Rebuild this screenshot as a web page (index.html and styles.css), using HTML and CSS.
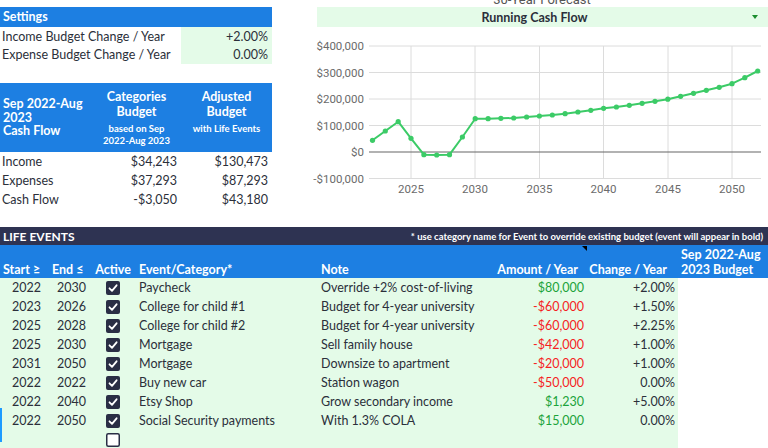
FILE: index.html
```html
<!DOCTYPE html>
<html>
<head>
<meta charset="utf-8">
<link rel="stylesheet" href="styles.css">
</head>
<body>
<div class="top">
  <div class="left">
    <div class="settings">
      <div class="hdr">Settings</div>
      <div class="srow"><span class="lbl">Income Budget Change / Year</span><span class="val">+2.00%</span></div>
      <div class="srow"><span class="lbl">Expense Budget Change / Year</span><span class="val">0.00%</span></div>
    </div>
    <div class="cf">
      <div class="cfhead">
        <div class="c1">Sep 2022-Aug<br>2023<br>Cash Flow</div>
        <div class="c2"><div class="big">Categories<br>Budget</div><div class="small">based on Sep<br>2022-Aug 2023</div></div>
        <div class="c3"><div class="big">Adjusted<br>Budget</div><div class="small">with Life Events</div></div>
      </div>
      <div class="cfrow"><span class="l">Income</span><span class="r">$34,243</span><span class="r">$130,473</span></div>
      <div class="cfrow"><span class="l">Expenses</span><span class="r">$37,293</span><span class="r">$87,293</span></div>
      <div class="cfrow"><span class="l">Cash Flow</span><span class="r">-$3,050</span><span class="r">$43,180</span></div>
    </div>
  </div>
  <div class="chart">
    <div class="ctitle">30-Year Forecast</div>
    <div class="dd"><span class="ddt">Running Cash Flow</span><span class="arrow"></span></div>
    <svg class="plot" width="468" height="200" viewBox="300 27 468 200">
      <g stroke="#dcdcdc" stroke-width="1">
        <line x1="369" y1="46" x2="761" y2="46"/>
        <line x1="369" y1="72.5" x2="761" y2="72.5"/>
        <line x1="369" y1="99" x2="761" y2="99"/>
        <line x1="369" y1="125.5" x2="761" y2="125.5"/>
        <line x1="369" y1="178.5" x2="761" y2="178.5"/>
        <line x1="411" y1="46" x2="411" y2="178.5"/>
        <line x1="475" y1="46" x2="475" y2="178.5"/>
        <line x1="539.5" y1="46" x2="539.5" y2="178.5"/>
        <line x1="603.5" y1="46" x2="603.5" y2="178.5"/>
        <line x1="668" y1="46" x2="668" y2="178.5"/>
        <line x1="732" y1="46" x2="732" y2="178.5"/>
      </g>
      <line x1="369" y1="152" x2="761" y2="152" stroke="#666" stroke-width="1.2"/>
      <g class="ylab" text-anchor="end">
        <text x="364" y="50">$400,000</text>
        <text x="364" y="76.5">$300,000</text>
        <text x="364" y="103">$200,000</text>
        <text x="364" y="129.5">$100,000</text>
        <text x="364" y="156">$0</text>
        <text x="364" y="182.5">-$100,000</text>
      </g>
      <g class="xlab" text-anchor="middle">
        <text x="411" y="193">2025</text>
        <text x="475" y="193">2030</text>
        <text x="539.5" y="193">2035</text>
        <text x="603.5" y="193">2040</text>
        <text x="668" y="193">2045</text>
        <text x="732" y="193">2050</text>
      </g>
      <polyline fill="none" stroke="#3ccb67" stroke-width="2" stroke-linejoin="round"
        points="372.5,140.3 385.3,131 398.2,121.7 411,138.3 423.9,154.7 436.7,155 449.5,154.7 462.4,137 475.2,118.7 488.1,118.7 500.9,118.3 513.7,118 526.6,117 539.4,116 552.3,115 565.1,113.7 577.9,112 590.8,110.3 603.6,108.3 616.4,107 629.3,105.3 642.1,103.3 655,101.3 667.8,99.2 680.6,96.3 693.5,93.3 706.3,90.3 719.2,87.3 732,83.7 744.8,77.7 757.7,71"/>
      <g fill="#3ccb67">
        <circle cx="372.5" cy="140.3" r="2.6"/><circle cx="385.3" cy="131" r="2.6"/><circle cx="398.2" cy="121.7" r="2.6"/><circle cx="411" cy="138.3" r="2.6"/><circle cx="423.9" cy="154.7" r="2.6"/><circle cx="436.7" cy="155" r="2.6"/><circle cx="449.5" cy="154.7" r="2.6"/><circle cx="462.4" cy="137" r="2.6"/><circle cx="475.2" cy="118.7" r="2.6"/><circle cx="488.1" cy="118.7" r="2.6"/><circle cx="500.9" cy="118.3" r="2.6"/><circle cx="513.7" cy="118" r="2.6"/><circle cx="526.6" cy="117" r="2.6"/><circle cx="539.4" cy="116" r="2.6"/><circle cx="552.3" cy="115" r="2.6"/><circle cx="565.1" cy="113.7" r="2.6"/><circle cx="577.9" cy="112" r="2.6"/><circle cx="590.8" cy="110.3" r="2.6"/><circle cx="603.6" cy="108.3" r="2.6"/><circle cx="616.4" cy="107" r="2.6"/><circle cx="629.3" cy="105.3" r="2.6"/><circle cx="642.1" cy="103.3" r="2.6"/><circle cx="655" cy="101.3" r="2.6"/><circle cx="667.8" cy="99.2" r="2.6"/><circle cx="680.6" cy="96.3" r="2.6"/><circle cx="693.5" cy="93.3" r="2.6"/><circle cx="706.3" cy="90.3" r="2.6"/><circle cx="719.2" cy="87.3" r="2.6"/><circle cx="732" cy="83.7" r="2.6"/><circle cx="744.8" cy="77.7" r="2.6"/><circle cx="757.7" cy="71" r="2.6"/>
      </g>
    </svg>
  </div>
</div>

<div class="life">
  <div class="lebar"><span class="let">LIFE EVENTS</span><span class="len">* use category name for Event to override existing budget (event will appear in bold)</span></div>
  <div class="lehead">
    <div class="h hstart">Start ≥</div>
    <div class="h hend">End ≤</div>
    <div class="h hact">Active</div>
    <div class="h hev">Event/Category*</div>
    <div class="h hnote">Note</div>
    <div class="h hamt">Amount / Year<span class="cmt"></span></div>
    <div class="h hchg">Change / Year</div>
    <div class="h hbud">Sep 2022-Aug<br>2023 Budget</div>
  </div>
  <div class="rows">
    <div class="row"><span class="s">2022</span><span class="e">2030</span><span class="a"><svg class="cb" width="14" height="14" viewBox="0 0 14 14"><rect width="14" height="14" rx="2" fill="#2a2e45"/><path d="M3.5 7.3 L6 9.8 L10.6 4.3" fill="none" stroke="#fff" stroke-width="1.8" stroke-linecap="round" stroke-linejoin="round"/></svg></span><span class="ev">Paycheck</span><span class="nt">Override +2% cost-of-living</span><span class="am pos">$80,000</span><span class="ch">+2.00%</span><span class="bd"></span></div>
    <div class="row"><span class="s">2023</span><span class="e">2026</span><span class="a"><svg class="cb" width="14" height="14" viewBox="0 0 14 14"><rect width="14" height="14" rx="2" fill="#2a2e45"/><path d="M3.5 7.3 L6 9.8 L10.6 4.3" fill="none" stroke="#fff" stroke-width="1.8" stroke-linecap="round" stroke-linejoin="round"/></svg></span><span class="ev">College for child #1</span><span class="nt">Budget for 4-year university</span><span class="am neg">-$60,000</span><span class="ch">+1.50%</span><span class="bd"></span></div>
    <div class="row"><span class="s">2025</span><span class="e">2028</span><span class="a"><svg class="cb" width="14" height="14" viewBox="0 0 14 14"><rect width="14" height="14" rx="2" fill="#2a2e45"/><path d="M3.5 7.3 L6 9.8 L10.6 4.3" fill="none" stroke="#fff" stroke-width="1.8" stroke-linecap="round" stroke-linejoin="round"/></svg></span><span class="ev">College for child #2</span><span class="nt">Budget for 4-year university</span><span class="am neg">-$60,000</span><span class="ch">+2.25%</span><span class="bd"></span></div>
    <div class="row"><span class="s">2025</span><span class="e">2030</span><span class="a"><svg class="cb" width="14" height="14" viewBox="0 0 14 14"><rect width="14" height="14" rx="2" fill="#2a2e45"/><path d="M3.5 7.3 L6 9.8 L10.6 4.3" fill="none" stroke="#fff" stroke-width="1.8" stroke-linecap="round" stroke-linejoin="round"/></svg></span><span class="ev">Mortgage</span><span class="nt">Sell family house</span><span class="am neg">-$42,000</span><span class="ch">+1.00%</span><span class="bd"></span></div>
    <div class="row"><span class="s">2031</span><span class="e">2050</span><span class="a"><svg class="cb" width="14" height="14" viewBox="0 0 14 14"><rect width="14" height="14" rx="2" fill="#2a2e45"/><path d="M3.5 7.3 L6 9.8 L10.6 4.3" fill="none" stroke="#fff" stroke-width="1.8" stroke-linecap="round" stroke-linejoin="round"/></svg></span><span class="ev">Mortgage</span><span class="nt">Downsize to apartment</span><span class="am neg">-$20,000</span><span class="ch">+1.00%</span><span class="bd"></span></div>
    <div class="row"><span class="s">2022</span><span class="e">2022</span><span class="a"><svg class="cb" width="14" height="14" viewBox="0 0 14 14"><rect width="14" height="14" rx="2" fill="#2a2e45"/><path d="M3.5 7.3 L6 9.8 L10.6 4.3" fill="none" stroke="#fff" stroke-width="1.8" stroke-linecap="round" stroke-linejoin="round"/></svg></span><span class="ev">Buy new car</span><span class="nt">Station wagon</span><span class="am neg">-$50,000</span><span class="ch">0.00%</span><span class="bd"></span></div>
    <div class="row"><span class="s">2022</span><span class="e">2040</span><span class="a"><svg class="cb" width="14" height="14" viewBox="0 0 14 14"><rect width="14" height="14" rx="2" fill="#2a2e45"/><path d="M3.5 7.3 L6 9.8 L10.6 4.3" fill="none" stroke="#fff" stroke-width="1.8" stroke-linecap="round" stroke-linejoin="round"/></svg></span><span class="ev">Etsy Shop</span><span class="nt">Grow secondary income</span><span class="am pos">$1,230</span><span class="ch">+5.00%</span><span class="bd"></span></div>
    <div class="row"><span class="s">2022</span><span class="e">2050</span><span class="a"><svg class="cb" width="14" height="14" viewBox="0 0 14 14"><rect width="14" height="14" rx="2" fill="#2a2e45"/><path d="M3.5 7.3 L6 9.8 L10.6 4.3" fill="none" stroke="#fff" stroke-width="1.8" stroke-linecap="round" stroke-linejoin="round"/></svg></span><span class="ev">Social Security payments</span><span class="nt">With 1.3% COLA</span><span class="am pos">$15,000</span><span class="ch">0.00%</span><span class="bd"></span></div>
    <div class="row"><span class="s"></span><span class="e"></span><span class="a"><svg class="cb" width="14" height="14" viewBox="0 0 14 14"><rect x="0.75" y="0.75" width="12.5" height="12.5" rx="1.5" fill="#fff" stroke="#2a2e45" stroke-width="1.5"/></svg></span><span class="ev"></span><span class="nt"></span><span class="am"></span><span class="ch"></span><span class="bd"></span></div>
    <div class="sel"></div>
  </div>
</div>
</body>
</html>
```

FILE: styles.css
```css
* { box-sizing: border-box; }
body {
  margin: 0;
  width: 768px;
  height: 448px;
  overflow: hidden;
  background: #fff;
  font-family: Lato, "Noto Sans", sans-serif;
  font-size: 12.5px;
  color: #2b2f3a;
}
.top { display: flex; height: 227px; }
.left { width: 272px; padding-top: 7px; }
.hdr {
  background: #1d7fe2;
  color: #fff;
  font-weight: 700;
  height: 20px;
  line-height: 20px;
  padding-left: 3px;
}
.srow { display: flex; height: 18.5px; align-items: stretch; }
.srow .lbl { width: 181px; padding-left: 2px; display: flex; align-items: center; }
.srow .val {
  flex: 1;
  background: #e4fbe8;
  display: flex;
  align-items: center;
  justify-content: flex-end;
  padding-right: 4px;
}
.cf { margin-top: 19px; }
.cfhead {
  display: grid;
  grid-template-columns: 92px 89px 91px;
  background: #1d7fe2;
  color: #fff;
  font-weight: 700;
  height: 69px;
}
.c1 { align-self: center; padding-left: 3px; line-height: 13.5px; }
.c2, .c3 { align-self: start; text-align: center; padding-top: 6px; }
.big { line-height: 15px; }
.small { font-size: 9.5px; line-height: 11.5px; margin-top: 4px; }
.cfrow {
  display: grid;
  grid-template-columns: 92px 89px 91px;
  height: 19px;
  align-items: center;
}
.cfrow .l { padding-left: 2px; }
.cfrow .r { text-align: right; padding-right: 4px; }

.chart { margin-left: 28px; width: 468px; }
.ctitle {
  margin-top: -7px;
  height: 14px;
  line-height: 13px;
  font-family: Roboto, sans-serif;
  font-size: 13px;
  text-align: center;
  color: #555;
  padding-left: 16px;
}
.dd {
  margin-left: 17px;
  height: 20px;
  background: #e4fbe8;
  display: grid;
  grid-template-columns: 1fr 16px;
  align-items: center;
  font-weight: 700;
}
.ddt { text-align: center; }
.arrow {
  width: 0; height: 0;
  border-left: 3.5px solid transparent;
  border-right: 3.5px solid transparent;
  border-top: 4px solid #1b8d2e;
}
.plot { display: block; }
.ylab text, .xlab text {
  font-family: Roboto, sans-serif;
  font-size: 11.5px;
  fill: #6b6b6b;
}

.life { position: relative; }
.lebar {
  height: 18px;
  background: #2e3352;
  color: #fff;
  display: flex;
  justify-content: space-between;
  align-items: center;
  padding: 0 5px 0 3px;
}
.let { font-weight: 700; font-size: 12px; }
.len { font-size: 9.5px; font-weight: 700; }
.lehead, .row {
  display: grid;
  grid-template-columns: 45px 45px 46px 181px 140px 131px 90px 90px;
}
.lehead {
  height: 33px;
  background: #1d7fe2;
  color: #fff;
  font-weight: 700;
  align-items: end;
  line-height: 15px;
  padding-bottom: 1px;
}
.h { white-space: nowrap; }
.hstart { padding-left: 3px; }
.hend { padding-left: 7px; }
.hact { text-align: center; }
.hev { padding-left: 3px; }
.hnote { padding-left: 4px; }
.hamt { text-align: right; padding-right: 10px; position: relative; align-self: stretch; display: flex; align-items: flex-end; justify-content: flex-end; }
.hchg { text-align: right; padding-right: 11px; }
.hbud { padding-left: 3px; }
.cmt {
  position: absolute;
  top: 1px;
  right: 1px;
  width: 0; height: 0;
  border-top: 5px solid #000;
  border-left: 5px solid transparent;
}
.row {
  height: 19px;
  align-items: center;
  background: #e4fbe8;
  white-space: nowrap;
}
.row .s { text-align: right; padding-right: 4px; }
.row .e { text-align: right; padding-right: 4px; }
.row .a { display: flex; justify-content: center; }
.cb { display: block; }
.row .ev { padding-left: 3px; }
.row .nt { padding-left: 4px; }
.row .am { text-align: right; padding-right: 4px; }
.row .ch { text-align: right; padding-right: 3px; }
.row .bd { background: #fff; align-self: stretch; }
.pos { color: #1ca33b; }
.neg { color: #f51f1f; }
.sel {
  position: absolute;
  left: 0;
  top: 181px;
  width: 1.5px;
  height: 34px;
  background: #1e9bff;
}
```
